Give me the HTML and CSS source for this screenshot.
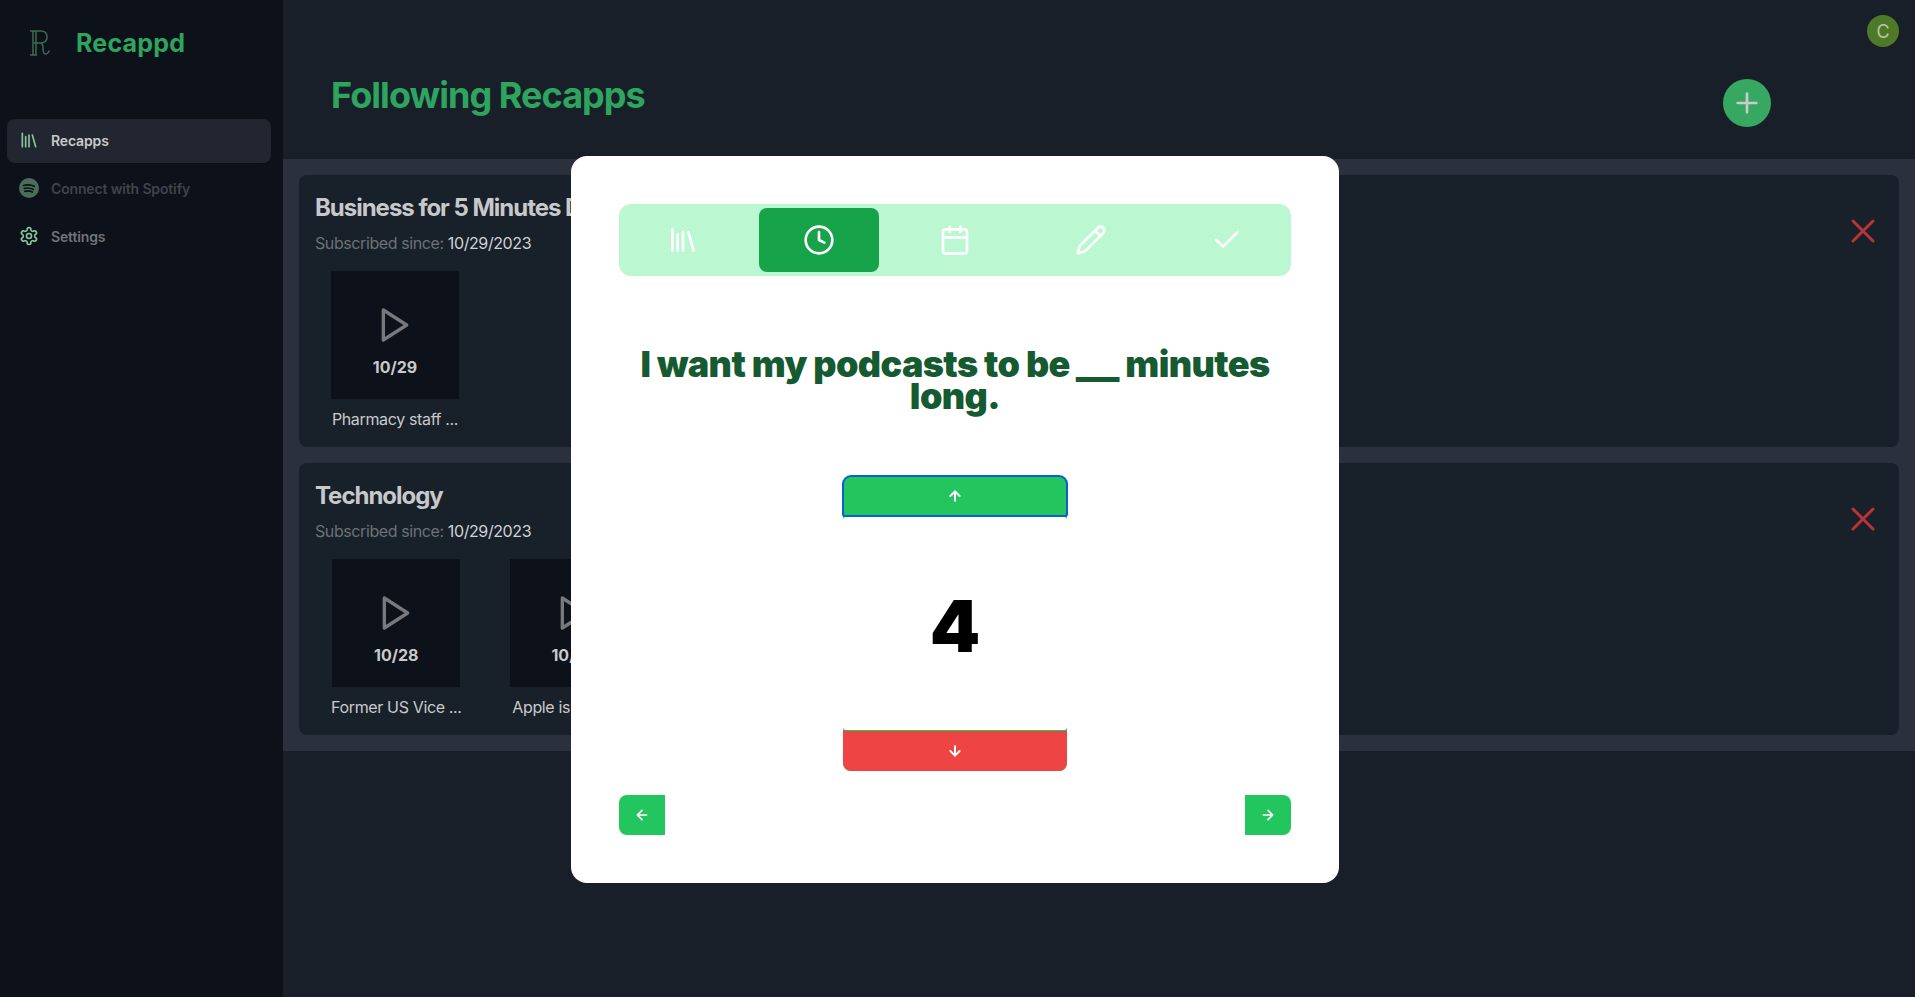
FILE: index.html
```html
<!DOCTYPE html>
<html lang="en">
<head>
<meta charset="utf-8">
<title>Recappd</title>
<link rel="stylesheet" href="styles.css">
</head>
<body>
<div class="app">
  <aside class="sidebar">
    <div class="brand">
      <svg class="brand-mark" viewBox="0 0 22 28" fill="none" stroke="currentColor" stroke-width="2"><path d="M1 2h11c4 0 6 2 6 6s-3 6-7 6H4M4 2v24M1 26h7M7 2v24M11 14c2 0 3 1.500 3 5s.5 6 2.500 6c1.500 0 3-1.500 4-3.500"/></svg>
      <span class="brand-name">Recappd</span>
    </div>
    <nav class="nav">
      <a class="nav-item active">
        <svg class="nav-icon" viewBox="0 0 24 24"><path d="m16 6 4 14M12 6v14M8 8v12M4 4v16"/></svg>
        <span>Recapps</span>
      </a>
      <a class="nav-item muted">
        <svg class="nav-icon spotify" viewBox="0 0 24 24"><circle cx="12" cy="12" r="12" class="spotify-disc"/><path d="M5.500 9c4.500-1.300 9-1 13 1M6.300 12.600c3.800-1 7.600-.8 11 1.100M7 16c3.200-.8 6.300-.6 9 .9" class="spotify-arcs"/></svg>
        <span>Connect with Spotify</span>
      </a>
      <a class="nav-item">
        <svg class="nav-icon" viewBox="0 0 24 24"><path d="M12.220 2h-.44a2 2 0 0 0-2 2v.18a2 2 0 0 1-1 1.730l-.43.25a2 2 0 0 1-2 0l-.15-.08a2 2 0 0 0-2.730.73l-.22.38a2 2 0 0 0 .73 2.730l.15.1a2 2 0 0 1 1 1.720v.51a2 2 0 0 1-1 1.740l-.15.09a2 2 0 0 0-.73 2.730l.22.38a2 2 0 0 0 2.730.73l.15-.08a2 2 0 0 1 2 0l.43.25a2 2 0 0 1 1 1.730V20a2 2 0 0 0 2 2h.44a2 2 0 0 0 2-2v-.18a2 2 0 0 1 1-1.730l.43-.25a2 2 0 0 1 2 0l.15.08a2 2 0 0 0 2.730-.73l.22-.39a2 2 0 0 0-.73-2.730l-.15-.08a2 2 0 0 1-1-1.740v-.5a2 2 0 0 1 1-1.740l.15-.09a2 2 0 0 0 .73-2.730l-.22-.38a2 2 0 0 0-2.730-.73l-.15.08a2 2 0 0 1-2 0l-.43-.25a2 2 0 0 1-1-1.730V4a2 2 0 0 0-2-2z"/><circle cx="12" cy="12" r="3"/></svg>
        <span>Settings</span>
      </a>
    </nav>
  </aside>

  <main class="main">
    <div class="topbar"><div class="avatar">C</div></div>
    <header class="header">
      <h1 class="page-title">Following Recapps</h1>
      <button class="add-btn"><svg viewBox="0 0 24 24"><path d="M5 12h14M12 5v14"/></svg></button>
    </header>
    <section class="band">
      <article class="card">
        <div class="card-body">
          <h2 class="card-title">Business for 5 Minutes Daily</h2>
          <p class="since">Subscribed since: <span>10/29/2023</span></p>
          <div class="episodes">
            <div class="episode">
              <div class="thumb"><svg viewBox="0 0 24 24"><path d="M5 3l14 9-14 9z"/></svg><b>10/29</b></div>
              <span class="caption">Pharmacy staff ...</span>
            </div>
          </div>
        </div>
        <button class="remove"><svg viewBox="0 0 24 24"><path d="M18 6 6 18M6 6l12 12"/></svg></button>
      </article>
      <article class="card">
        <div class="card-body">
          <h2 class="card-title">Technology</h2>
          <p class="since">Subscribed since: <span>10/29/2023</span></p>
          <div class="episodes">
            <div class="episode">
              <div class="thumb"><svg viewBox="0 0 24 24"><path d="M5 3l14 9-14 9z"/></svg><b>10/28</b></div>
              <span class="caption">Former US Vice ...</span>
            </div>
            <div class="episode">
              <div class="thumb"><svg viewBox="0 0 24 24"><path d="M5 3l14 9-14 9z"/></svg><b>10/28</b></div>
              <span class="caption">Apple is rolling ...</span>
            </div>
          </div>
        </div>
        <button class="remove"><svg viewBox="0 0 24 24"><path d="M18 6 6 18M6 6l12 12"/></svg></button>
      </article>
    </section>
  </main>
</div>

<div class="overlay">
  <div class="modal">
    <div class="steps">
      <div class="step"><svg viewBox="0 0 24 24"><path d="m16 6 4 14M12 6v14M8 8v12M4 4v16"/></svg></div>
      <div class="step current"><svg viewBox="0 0 24 24"><circle cx="12" cy="12" r="10"/><path d="M12 6v6l4 2"/></svg></div>
      <div class="step"><svg viewBox="0 0 24 24"><path d="M8 2v4M16 2v4M3 10h18"/><rect x="3" y="4" width="18" height="18" rx="2"/></svg></div>
      <div class="step"><svg viewBox="0 0 24 24"><path d="M21.174 6.812a1 1 0 0 0-3.986-3.987L3.842 16.174a2 2 0 0 0-.5.83l-1.321 4.352a.5.5 0 0 0 .623.622l4.353-1.32a2 2 0 0 0 .83-.497zM15 5l4 4"/></svg></div>
      <div class="step"><svg viewBox="0 0 24 24"><path d="M20 6 9 17l-5-5"/></svg></div>
    </div>
    <h2 class="question">I want my podcasts to be <span class="blank">__</span> minutes long.</h2>
    <div class="stepper">
      <button class="stepper-btn up"><svg viewBox="0 0 24 24"><path d="m5 12 7-7 7 7M12 19V5"/></svg></button>
      <div class="value">4</div>
      <button class="stepper-btn down"><svg viewBox="0 0 24 24"><path d="M12 5v14M19 12l-7 7-7-7"/></svg></button>
    </div>
    <div class="pager">
      <button class="page-btn back"><svg viewBox="0 0 24 24"><path d="m12 19-7-7 7-7M19 12H5"/></svg></button>
      <button class="page-btn next"><svg viewBox="0 0 24 24"><path d="M5 12h14M12 5l7 7-7 7"/></svg></button>
    </div>
  </div>
</div>
</body>
</html>
```
FILE: styles.css
```css
* { box-sizing: border-box; }
html, body { margin: 0; height: 100%; overflow: hidden; }
body { font-family: Inter, "Liberation Sans", sans-serif; background: #181f29; }
h1, h2, p { margin: 0; }
button { border: 0; padding: 0; font: inherit; cursor: pointer; }
svg { display: block; fill: none; stroke: currentColor; stroke-width: 2; stroke-linecap: round; stroke-linejoin: round; }

.app { display: flex; height: 997px; }

.sidebar { width: 283px; flex: none; background: #0d1119; padding: 29px 12px 0 7px; }
.brand { display: flex; align-items: flex-start; height: 90px; }
.brand-mark { width: 22px; height: 28px; margin-left: 22px; color: #3d6b4d; stroke-width: 1.5; stroke-linecap: butt; }
.brand-name { margin-left: 25px; margin-top: -2px; font-size: 25px; line-height: 32px; font-weight: 700; letter-spacing: .2px; color: #2ea55f; }
.nav { display: flex; flex-direction: column; gap: 4px; }
.nav-item { display: flex; align-items: center; gap: 12px; height: 44px; padding: 0 0 2px 12px; border-radius: 8px; font-size: 14px; font-weight: 600; letter-spacing: -.15px; color: #6f737b; }
.nav-item.active { background: #212630; color: #c9cacd; }
.nav-item.muted { color: #3f434c; }
.nav-icon { width: 20px; height: 20px; flex: none; stroke-width: 2; color: #8ac49e; }
.nav-icon.spotify { width: 20px; height: 20px; stroke: none; }
.spotify-disc { fill: #4a6d5a; stroke: none; }
.spotify-arcs { stroke: #0d1119; stroke-width: 2; fill: none; }

.main { flex: 1; min-width: 0; display: flex; flex-direction: column; }
.topbar { height: 64px; padding: 15px 16px 0 0; display: flex; justify-content: flex-end; }
.avatar { width: 32px; height: 32px; border-radius: 50%; background: #4e7a28; color: #b9c5a9; font-size: 18px; display: flex; align-items: center; justify-content: center; }
.header { height: 95px; padding: 11px 144px 0 48px; display: flex; justify-content: space-between; align-items: flex-start; }
.page-title { font-size: 36px; line-height: 40px; font-weight: 700; letter-spacing: -.95px; color: #2ea55f; }
.add-btn { width: 48px; height: 48px; margin-top: 4px; border-radius: 50%; background: #37a862; color: #c9cdc9; display: flex; align-items: center; justify-content: center; }
.add-btn svg { width: 32px; height: 32px; }

.band { background: #2a303c; padding: 16px; display: flex; flex-direction: column; gap: 16px; }
.card { background: #18202a; border-radius: 8px; padding: 16px; display: flex; justify-content: space-between; }
.card-title { font-size: 24px; line-height: 32px; padding-top: 1px; height: 32px; font-weight: 700; letter-spacing: -1.02px; color: #c7c8ca; white-space: nowrap; }
.since { margin-top: 8px; font-size: 16px; line-height: 24px; letter-spacing: -.4px; color: #6b7079; }
.since span { color: #d0d2d5; }
.episodes { display: flex; gap: 48px; margin-top: 16px; padding-left: 16px; }
.episode { display: flex; flex-direction: column; align-items: center; }
.thumb { width: 128px; height: 128px; background: #0d1119; display: flex; flex-direction: column; align-items: center; padding-top: 34px; color: #78797d; }
.thumb svg { width: 40px; height: 40px; }
.thumb b { margin-top: 10px; font-size: 16px; line-height: 24px; font-weight: 700; color: #c9cacc; }
.caption { margin-top: 8px; font-size: 16px; line-height: 24px; letter-spacing: -.35px; color: #c8cacc; white-space: nowrap; }
.remove { width: 40px; height: 40px; margin-top: 20px; background: none; color: #b93535; }
.remove svg { width: 40px; height: 40px; stroke-width: 1.8; }

.overlay { position: fixed; inset: 0; padding: 156px 5px 0 0; display: flex; justify-content: center; align-items: flex-start; }
.modal { width: 768px; height: 727px; padding: 48px; background: #fff; border-radius: 16px; }
.steps { display: flex; gap: 16px; padding: 4px; height: 72px; background: #bbf7d0; border-radius: 12px; }
.step { width: 120px; border-radius: 8px; color: #fff; display: flex; align-items: center; justify-content: center; }
.step svg { width: 32px; height: 32px; }
.step.current { background: #16a34a; }
.question { margin-top: 72px; font-size: 36px; line-height: 32px; font-weight: 900; letter-spacing: -.6px; color: #155a30; text-align: center; }
.blank { display: inline-block; margin: 0 4px; transform: scaleX(1.25); }
.stepper { width: 224px; margin: 64px auto 0; background: #22c55e; border-radius: 8px; display: flex; flex-direction: column; }
.stepper-btn { height: 40px; color: #fff; display: flex; align-items: center; justify-content: center; }
.stepper-btn svg { width: 16px; height: 16px; stroke-width: 3; }
.stepper-btn.up { background: #22c55e; border-radius: 8px 8px 2px 2px; outline: 2px solid #0b5fd0; outline-offset: -1px; }
.stepper-btn.down { background: #ef4444; border-radius: 0 0 8px 8px; }
.value { height: 213px; margin: 1px 0; padding-top: 3px; background: #fff; border-radius: 3px; display: flex; align-items: center; justify-content: center; font-size: 72px; font-weight: 900; color: #000; }
.pager { margin-top: 24px; display: flex; justify-content: space-between; }
.page-btn { width: 46px; height: 40px; background: #22c55e; color: #fff; display: flex; align-items: center; justify-content: center; }
.page-btn svg { width: 16px; height: 16px; stroke-width: 2.500; }
.page-btn.back { border-radius: 8px 0 0 8px; }
.page-btn.next { border-radius: 0 8px 8px 0; }
```
